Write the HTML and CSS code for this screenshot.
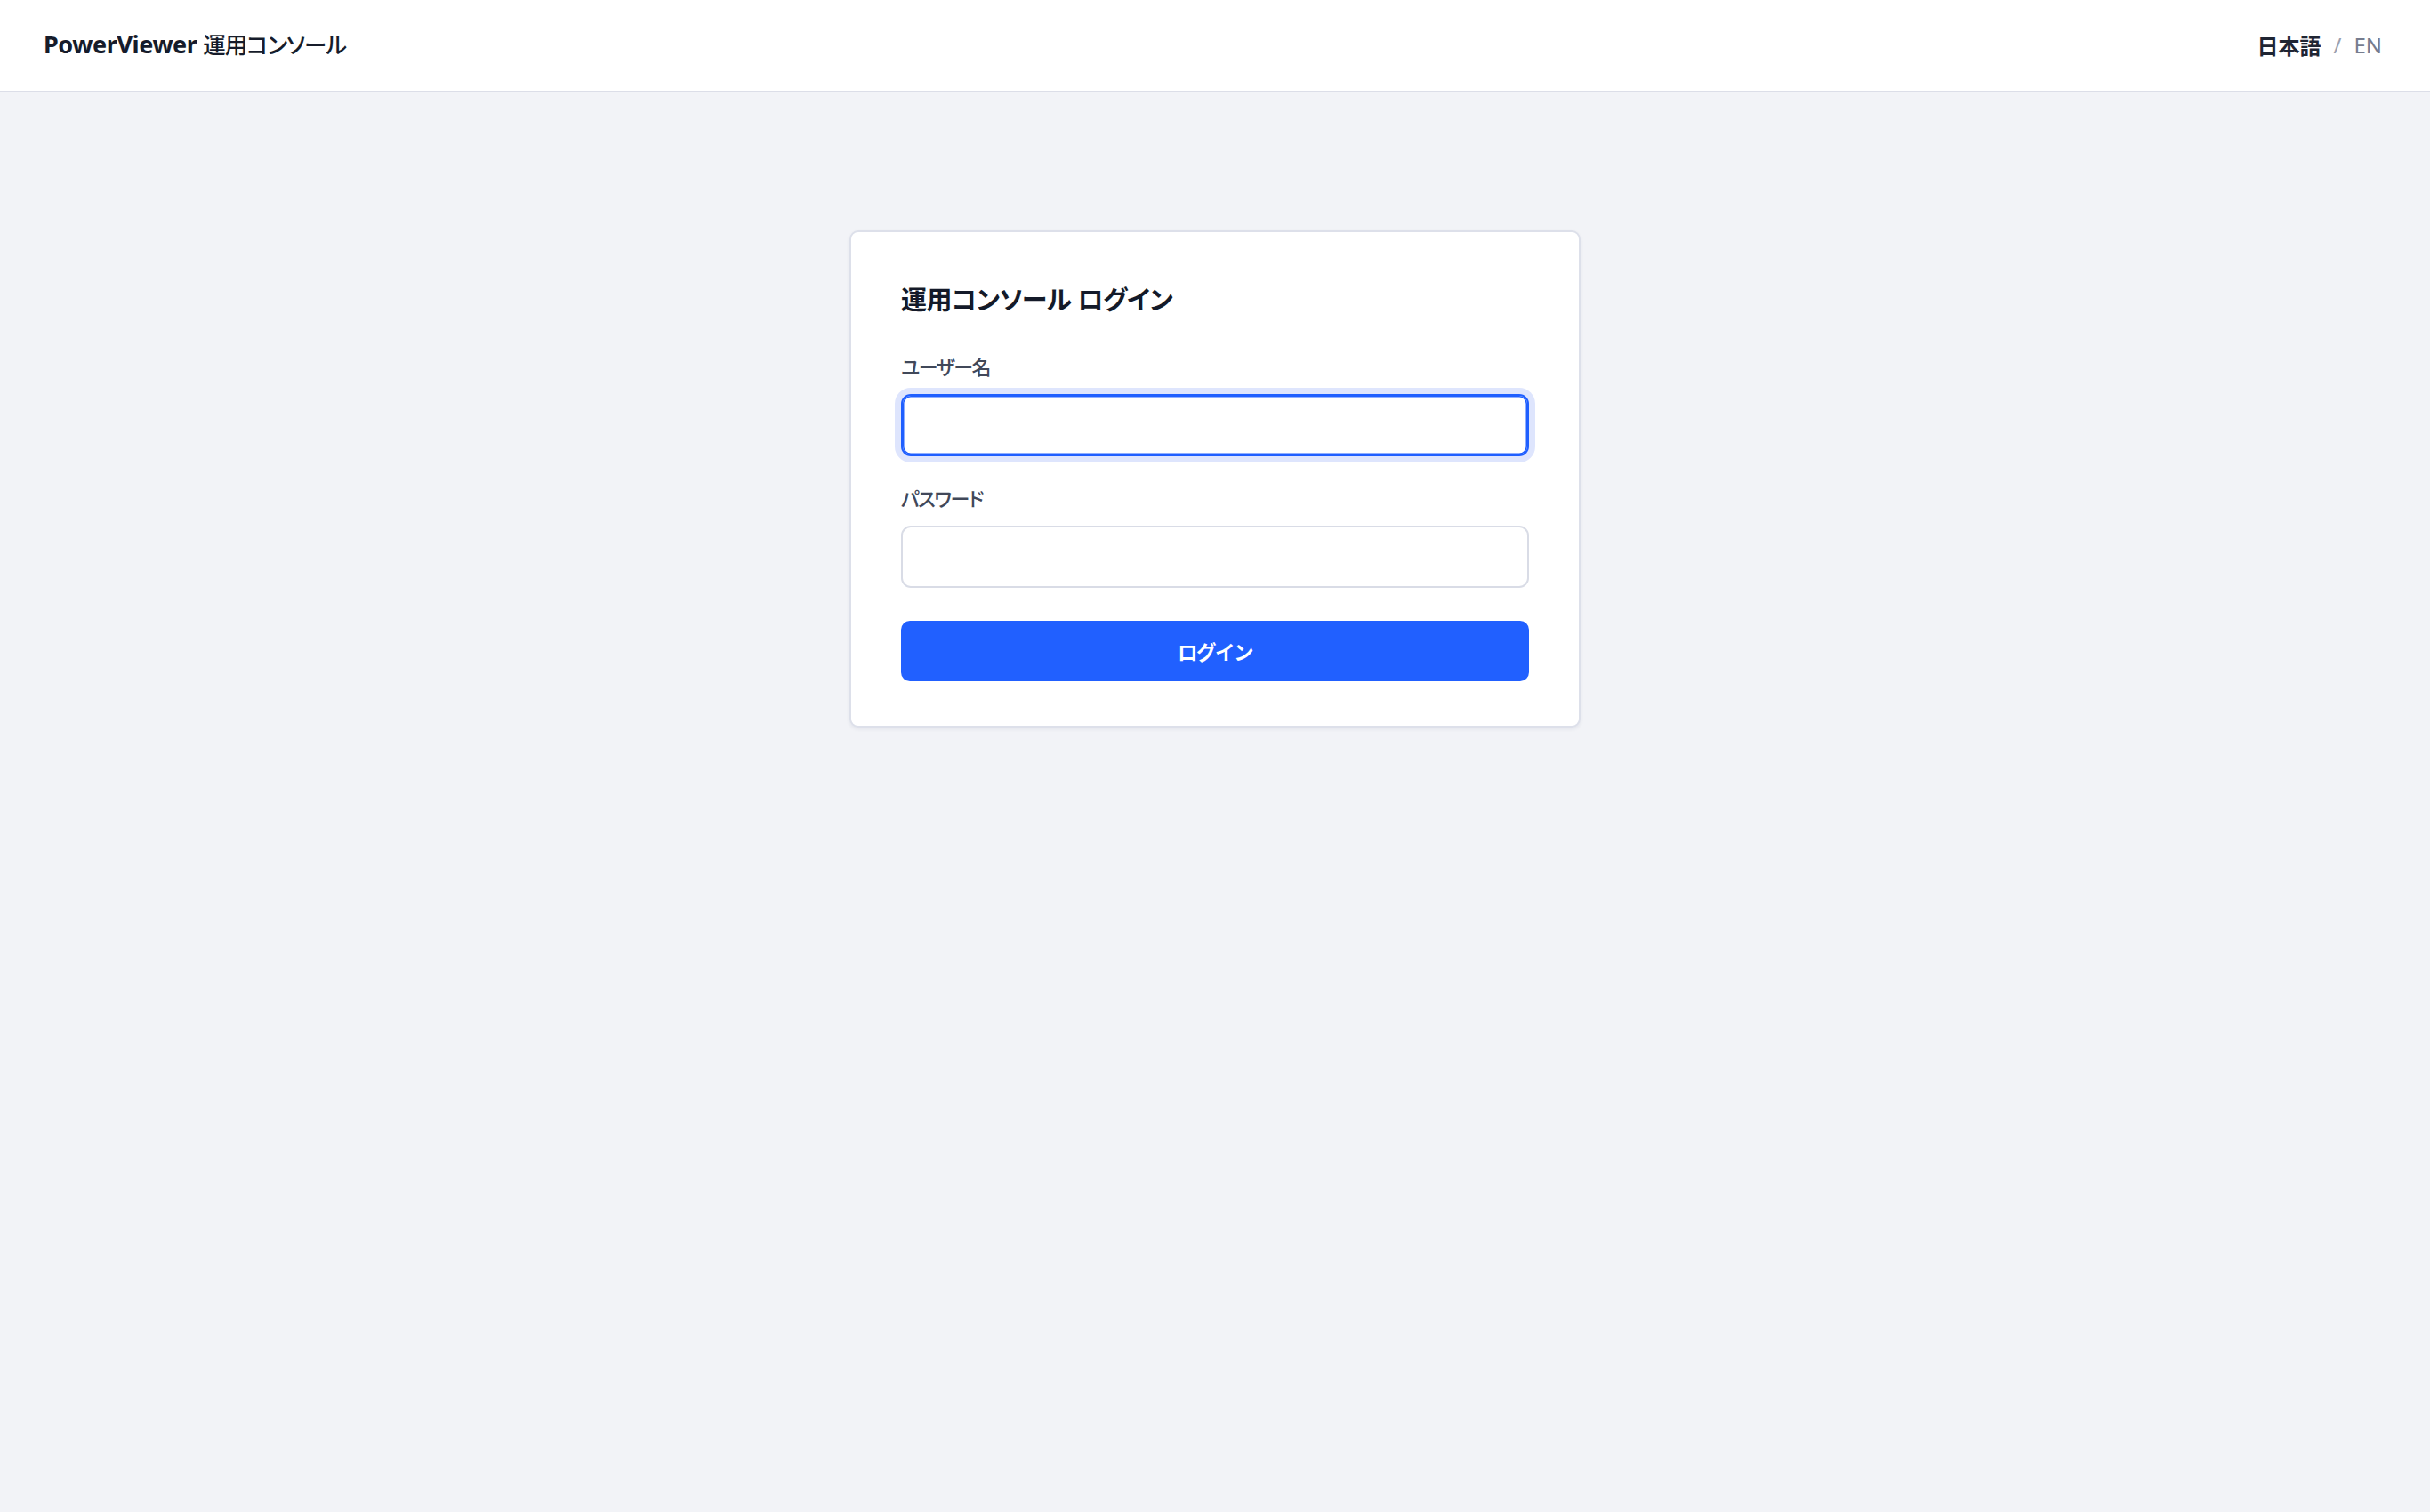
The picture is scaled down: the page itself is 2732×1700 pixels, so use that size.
FILE: index.html
```html
<!DOCTYPE html>
<html lang="ja">
<head>
<meta charset="utf-8">
<title>PowerViewer 運用コンソール</title>
<link rel="stylesheet" href="styles.css">
</head>
<body>
<header class="topbar">
  <div class="brand">PowerViewer <span class="brand-ja">運用コンソール</span></div>
  <nav class="lang">
    <span class="lang-active">日本語</span>
    <span class="lang-sep">/</span>
    <span class="lang-opt">EN</span>
  </nav>
</header>
<main class="page">
  <form class="card">
    <h1 class="card-title">運用コンソール ログイン</h1>
    <div class="field field-first">
      <label class="field-label" for="username">ユーザー名</label>
      <input class="field-input is-focused" id="username" type="text">
    </div>
    <div class="field">
      <label class="field-label" for="password">パスワード</label>
      <input class="field-input" id="password" type="password">
    </div>
    <button class="btn-primary" type="button">ログイン</button>
  </form>
</main>
</body>
</html>
```
FILE: styles.css
```css
html, body {
  margin: 0;
  padding: 0;
}
body {
  background: #f2f3f7;
  font-family: "Noto Sans", "Noto Sans CJK JP", sans-serif;
  font-feature-settings: "palt";
  color: #151b2a;
  min-height: 1700px;
}
.topbar {
  box-sizing: border-box;
  height: 104px;
  background: #ffffff;
  border-bottom: 2px solid #dcdee8;
  display: flex;
  align-items: center;
  justify-content: space-between;
  padding: 0 54px 0 49px;
}
.brand {
  font-size: 27px;
  font-weight: 700;
  letter-spacing: -0.4px;
  color: #161c2b;
  margin-bottom: 5px;
}
.brand-ja {
  font-size: 25.5px;
  font-weight: 500;
  letter-spacing: -1px;
}
.lang {
  display: flex;
  align-items: center;
  font-size: 24px;
  margin-bottom: 1px;
}
.lang-active {
  color: #1f2533;
  font-weight: 600;
}
.lang-sep {
  color: #9aa0ae;
  margin: 0 14px;
}
.lang-opt {
  color: #767c8e;
}
.page {
  display: flex;
  justify-content: center;
  padding-top: 155px;
}
.card {
  box-sizing: border-box;
  width: 822px;
  background: #ffffff;
  border: 2px solid #dde0ea;
  border-radius: 10px;
  padding: 56px 56px 50px;
  box-shadow: 0 2px 4px rgba(30, 40, 80, 0.07);
  display: flex;
  flex-direction: column;
}
.card-title {
  margin: 0;
  font-size: 29px;
  line-height: 40px;
  font-weight: 700;
  letter-spacing: -0.6px;
  color: #141a29;
}
.field {
  display: flex;
  flex-direction: column;
  margin-top: 30px;
}
.field-first {
  margin-top: 38px;
}
.field-label {
  font-size: 22px;
  line-height: 35px;
  font-weight: 500;
  letter-spacing: -1.5px;
  color: #414859;
  margin-bottom: 13px;
}
.field-input {
  box-sizing: border-box;
  width: 100%;
  height: 70px;
  border: 2px solid #d9dce6;
  border-radius: 11px;
  background: #ffffff;
  padding: 0 20px;
  font-size: 24px;
  outline: none;
}
.field-input.is-focused {
  border-color: #1f5fff;
  box-shadow: inset 0 0 0 1.5px #1f5fff, 0 0 0 7px #dee5fd;
}
.btn-primary {
  margin-top: 37px;
  height: 68px;
  border: none;
  border-radius: 10px;
  background: #2160ff;
  color: #ffffff;
  font-family: inherit;
  font-size: 22.5px;
  font-weight: 700;
  letter-spacing: -1.5px;
  cursor: pointer;
}
```
